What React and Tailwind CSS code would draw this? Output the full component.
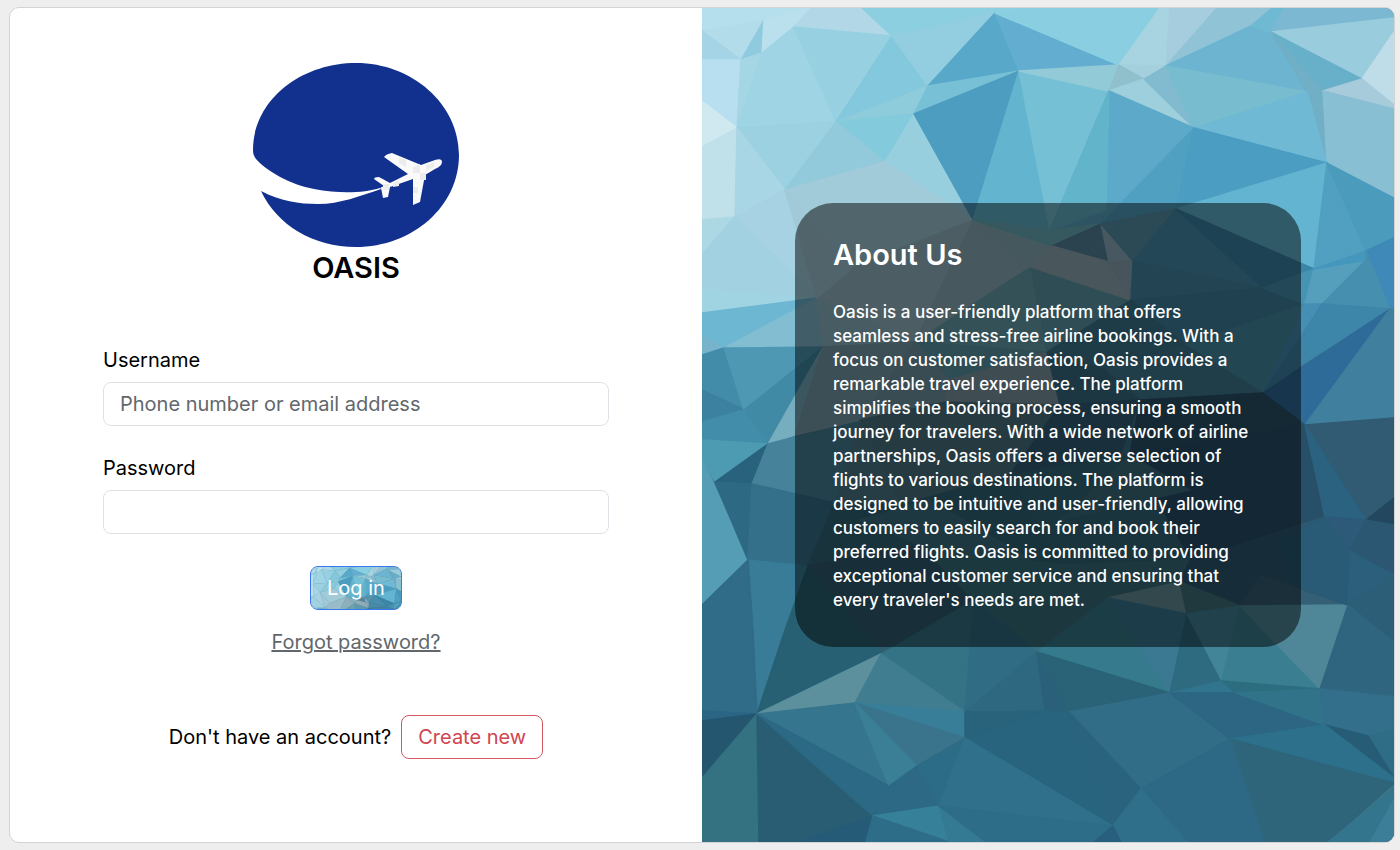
import React from "react";

const FACETS = [
  // upper left
  ["702,8 811,8 794,27 764,20 702,31", "#b5dfec"],
  ["702,31 764,20 741,60", "#b3dceb"],
  ["702,31 741,60 702,60", "#a5d4e6"],
  ["764,20 741,60 762,53", "#90cade"],
  ["764,20 811,8 794,27 762,53", "#b9e0ec"],
  ["811,8 862,8 892,36 794,27", "#b2d8e8"],
  ["862,8 1050,8 995,13 892,36", "#8ccfe1"],
  ["702,60 741,60 737,128 702,101", "#b7dfef"],
  ["741,60 762,53 737,128", "#a5d6e4"],
  ["702,101 737,128 702,147", "#d0e9f0"],
  ["702,147 737,128 735,217 702,220", "#c0e0ea"],
  ["762,53 794,27 836,122 737,128", "#9ed4e3"],
  ["794,27 892,36 836,122", "#97d1e1"],
  ["892,36 836,122 928,86", "#83c8dd"],
  ["892,36 995,13 928,86", "#93cde0"],
  ["737,128 836,122 785,190", "#9bd1e1"],
  ["737,128 785,190 735,217", "#a9d6e4"],
  ["836,122 928,86 914,114", "#8ecbdb"],
  ["836,122 914,114 885,162", "#83cbdc"],
  ["836,122 885,162 785,190", "#92cadb"],
  ["914,114 885,162 973,220", "#98cfde"],
  ["995,13 1019,71 928,86", "#58a8c9"],
  ["928,86 1019,71 914,114", "#78c0d5"],
  ["1019,71 914,114 973,220", "#4d9dc0"],
  ["1019,71 973,220 1050,230", "#63b5cf"],
  ["1019,71 1109,91 1050,230", "#76c0d5"],
  ["995,13 1119,65 1019,71", "#63aed0"],
  ["995,13 1050,8 1160,8 1119,65", "#8acfe1"],
  ["1019,71 1119,65 1109,91", "#92cad7"],
  // upper right
  ["1160,8 1170,8 1166,66 1119,65", "#a8d4e1"],
  ["1170,8 1217,8 1166,66", "#a6cddd"],
  ["1217,8 1272,8 1251,26 1166,66", "#91c3d6"],
  ["1119,65 1166,66 1144,79", "#a4d0dd"],
  ["1119,65 1144,79 1109,91", "#91c0cd"],
  ["1144,79 1109,91 1194,128", "#9ecfdd"],
  ["1144,79 1166,66 1194,128", "#82bacf"],
  ["1166,66 1251,26 1271,32 1307,92", "#6cb4cf"],
  ["1166,66 1307,92 1194,128", "#78bcd0"],
  ["1272,8 1285,8 1271,32 1251,26", "#6fb9d3"],
  ["1285,8 1394,8 1394,18 1271,32", "#7cb8d2"],
  ["1271,32 1394,18 1394,32 1362,79", "#99ccdc"],
  ["1394,32 1394,105 1362,79", "#bfdde9"],
  ["1271,32 1362,79 1323,91", "#68b0ca"],
  ["1271,32 1323,91 1327,163 1307,92", "#70afc5"],
  ["1323,91 1362,79 1394,105 1394,109", "#a7cbda"],
  ["1323,91 1394,109 1394,198 1327,163", "#89bfd3"],
  ["1194,128 1307,92 1327,163", "#6fb9d4"],
  ["1109,91 1194,128 1101,224 1050,230", "#5da9c9"],
  ["1109,91 1106,210 1050,230", "#62b4ca"],
  ["1194,128 1176,209 1101,224", "#50a0c2"],
  ["1194,128 1327,163 1176,209", "#4b9dc1"],
  ["1327,163 1314,269 1176,209", "#63b4d1"],
  ["1327,163 1366,251 1314,269", "#519fc1"],
  ["1327,163 1394,198 1394,238 1366,251", "#4b9bbd"],
  // middle left
  ["702,220 735,217 702,254", "#acd8e4"],
  ["735,217 785,190 817,298", "#a7d2e4"],
  ["702,254 735,217 817,298 702,290", "#a2d1e2"],
  ["702,290 817,298 702,313", "#a1d4e2"],
  ["702,313 817,298 724,348 702,335", "#6db7d3"],
  ["702,335 724,348 702,355", "#77b4cb"],
  ["817,298 823,347 724,348", "#83bdd1"],
  ["785,190 885,162 973,220 853,267", "#a2cbda"],
  ["853,267 973,220 915,342 817,298", "#98bdc9"],
  ["817,298 915,342 823,347", "#90b9c6"],
  ["853,267 817,298 785,190", "#a2c9d7"],
  ["973,220 1052,246 1031,267", "#8ab0bd"],
  ["973,220 1031,267 915,342", "#8eb0bc"],
  ["973,220 1050,230 1101,224 1052,246", "#6cb0bf"],
  ["915,342 1031,267 1047,352", "#6ba2b0"],
  ["1031,267 1131,300 1047,352", "#5e9aab"],
  ["1101,224 1109,262 1052,246", "#56849f"],
  ["1101,224 1133,261 1109,262", "#90b0c0"],
  ["1052,246 1109,262 1131,300 1031,267", "#92acb8"],
  ["1109,262 1133,261 1131,300", "#8ea9b6"],
  ["1101,224 1176,209 1133,261", "#5894aa"],
  ["1176,209 1263,288 1133,261", "#478fad"],
  ["1176,209 1314,269 1263,288", "#3b85a6"],
  ["1133,261 1263,288 1215,298 1131,300", "#478ba6"],
  ["1131,300 1263,288 1305,304 1185,345", "#40839f"],
  ["1131,300 1185,345 1105,370 1047,352", "#3c788e"],
  ["1185,345 1305,304 1263,393", "#478ca7"],
  ["1185,345 1263,393 1140,400 1105,370", "#417c92"],
  // right edge
  ["1263,288 1314,269 1305,304", "#4793b2"],
  ["1314,269 1366,260 1322,304 1305,304", "#559fbd"],
  ["1314,269 1366,251 1394,238 1394,262 1366,260", "#4597bd"],
  ["1366,251 1394,238 1394,309 1390,309", "#3f89b8"],
  ["1366,260 1366,251 1390,309 1322,304", "#468fae"],
  ["1305,304 1322,304 1300,338 1263,393", "#458eb4"],
  ["1322,304 1390,309 1300,366 1263,393 1300,338", "#3e85aa"],
  ["1390,309 1263,393 1305,425", "#2e6b98"],
  ["1390,309 1394,309 1394,418 1305,425", "#407f9d"],
  // left edge
  ["702,355 724,348 744,410 702,390", "#428ba9"],
  ["702,390 744,410 702,422", "#3c819f"],
  ["724,348 823,347 744,410", "#4e98b3"],
  ["823,347 744,410 768,444", "#418aa6"],
  ["823,347 795,435 768,444", "#76adbf"],
  ["702,422 744,410 768,444 702,440", "#428da9"],
  ["702,440 768,444 715,482 702,458", "#4d9bb2"],
  ["768,444 752,484 715,482", "#28627c"],
  ["702,458 748,560 702,605", "#549db5"],
  ["715,482 752,484 748,560", "#2e6983"],
  ["768,444 860,420 835,503 752,484", "#46829a"],
  ["752,484 835,503 808,566 748,560", "#34708a"],
  ["748,560 808,566 785,630 757,714 753,630", "#397c97"],
  ["702,605 748,560 753,630 757,714 702,711", "#306b87"],
  // centre
  ["823,347 915,342 860,420 795,435", "#7b9fac"],
  ["915,342 1047,352 950,380", "#5c98a9"],
  ["915,342 950,380 945,402 860,420", "#7398a6"],
  ["950,380 1047,352 1060,405 945,402", "#7f9ba6"],
  ["1047,352 1105,370 1140,400 1060,405", "#3a6e84"],
  ["860,420 945,402 1060,405 1010,475 900,505", "#4a7482"],
  ["860,420 900,505 835,503", "#4f7b8b"],
  ["1060,405 1140,400 1120,455 1010,475", "#326079"],
  ["1140,400 1263,393 1305,425 1130,455", "#2a526b"],
  ["1130,455 1305,425 1325,517 1190,560", "#284f68"],
  ["1010,475 1130,455 1190,560 1060,565", "#326879"],
  ["1130,455 1190,490 1060,520", "#3c6e7e"],
  ["835,503 900,505 1010,475 1060,565 930,545 808,566", "#33667a"],
  ["860,520 930,500 1030,560 920,545", "#3b7182"],
  ["808,566 920,545 974,600 974,620 881,654", "#315c70"],
  ["808,566 881,654 757,714 785,630", "#286073"],
  ["920,545 1060,565 1037,652 974,600", "#38707f"],
  ["974,600 974,647 965,712 881,654", "#347285"],
  ["974,600 1037,652 965,712", "#306d85"],
  ["1060,565 1190,560 1187,614 1108,598 1037,652", "#3a6f7f"],
  ["1108,598 1180,582 1187,614", "#67909b"],
  ["1190,560 1325,517 1348,605 1240,606 1180,582", "#2e5972"],
  ["1260,576 1348,605 1240,606", "#355f75"],
  ["1180,582 1240,606 1187,614", "#41727f"],
  ["1037,652 1108,598 1170,693", "#357b8d"],
  ["1108,598 1187,614 1170,693", "#3b7992"],
  ["1187,614 1222,681 1170,693", "#2e6b80"],
  ["1187,614 1240,606 1222,681", "#428498"],
  ["1240,606 1320,689 1222,681", "#397f91"],
  ["1240,606 1348,605 1320,689", "#4f8799"],
  // lower right edge
  ["1305,425 1394,418 1394,498 1366,520", "#315b73"],
  ["1305,425 1366,520 1325,517", "#2b627f"],
  ["1366,520 1394,498 1394,525", "#23475f"],
  ["1325,517 1366,520 1350,551", "#2c5a78"],
  ["1366,520 1394,525 1394,575 1350,551", "#2b5772"],
  ["1325,517 1350,551 1348,605 1290,585 1280,540", "#295a76"],
  ["1350,551 1394,575 1348,605", "#2b5f7b"],
  ["1348,605 1394,575 1394,642", "#2c5e78"],
  ["1348,605 1394,642 1394,697 1320,689", "#30657f"],
  // bottom left
  ["702,711 757,714 702,721", "#2c6484"],
  ["702,721 757,714 702,778", "#24566f"],
  ["757,714 759,842 702,842 702,778", "#347181"],
  ["757,714 873,816 866,842 759,842", "#285d73"],
  ["873,816 866,842 800,842", "#265b77"],
  ["757,714 881,654 855,703", "#5d909d"],
  ["881,654 965,712 855,703", "#407d91"],
  ["757,714 855,703 889,786", "#35758e"],
  ["757,714 889,786 873,816", "#2c6984"],
  ["855,703 965,712 965,738", "#387e98"],
  ["855,703 965,738 917,766", "#3a748c"],
  ["855,703 917,766 889,786", "#3b7f97"],
  ["889,786 917,766 939,806 873,816", "#2d6985"],
  ["917,766 965,738 939,806", "#2c6c86"],
  ["873,816 939,806 949,842", "#37809a"],
  ["873,816 949,842 866,842", "#2e6d88"],
  ["939,806 986,842 949,842", "#347a92"],
  ["965,712 1037,652 1045,711", "#2e6880"],
  ["965,712 1045,711 965,738", "#29637b"],
  ["1037,652 1069,712 1045,711", "#2a6079"],
  ["965,738 1045,711 1069,712 1113,826", "#28647d"],
  ["965,738 1113,826 939,806", "#30708b"],
  ["939,806 1113,826 1094,842 986,842", "#2e6d87"],
  // bottom right
  ["1037,652 1170,693 1069,712", "#2a6377"],
  ["1069,712 1170,693 1141,789", "#326d88"],
  ["1069,712 1141,789 1113,826", "#2a637e"],
  ["1170,693 1230,739 1141,789", "#316d86"],
  ["1170,693 1222,681 1236,693", "#31748d"],
  ["1170,693 1236,693 1325,725 1230,739", "#2d6682"],
  ["1222,681 1320,689 1236,693", "#2d6d80"],
  ["1236,693 1320,689 1325,725", "#31748a"],
  ["1320,689 1394,697 1394,732 1368,736 1325,725", "#336f8b"],
  ["1368,736 1394,730 1394,776", "#2f6d86"],
  ["1325,725 1368,736 1394,778", "#265c75"],
  ["1230,739 1325,725 1394,778 1394,783", "#2d708b"],
  ["1230,739 1394,783 1328,842 1264,842", "#2e657b"],
  ["1230,739 1264,842 1187,842 1141,789", "#2d6884"],
  ["1141,789 1187,842 1121,842 1113,826", "#2f6f89"],
  ["1113,826 1121,842 1094,842", "#285f7f"],
  ["1394,789 1394,842 1328,842", "#34758e"],
  ["1394,800 1394,842 1370,842", "#3c7e98"],
];

function Crystals({ viewBox, className }) {
  return (
    <svg
      viewBox={viewBox}
      preserveAspectRatio="xMidYMid slice"
      aria-hidden="true"
      className={className}
    >
      <rect x="702" y="8" width="692" height="834" fill="#3a7488" />
      {FACETS.map(([points, fill]) => (
        <polygon
          key={points}
          points={points}
          fill={fill}
          stroke={fill}
          strokeWidth="1.4"
          strokeLinejoin="round"
        />
      ))}
    </svg>
  );
}

function Logo() {
  return (
    <svg viewBox="0 0 206 184" className="h-[184px] w-[206px]" role="img" aria-label="Oasis logo">
      <path
        fill="#12318f"
        d="M0 87C0 38 47 0 103 0s103 41 103 92-46 92-103 92C60 184 24 162 8 128c19 10 38 13 57 13 22 0 42-8 63-15l-1-1c-16 5-40 6-66 1C38 122 12 107 3 96 1 93 0 91 0 87Z"
      />
      <path
        fill="#fafafa"
        d="M124 126.500L131 123 121 116q0-2 5-2l11 6 18-9-24-17q2-3 8-4l29 12 14-5q7-2 7 2 0 4-7 7l-10 6-5 27-7 3V116l-23 8-2 10-5 1-2-10Z"
      />
      <path
        fill="#ececec"
        d="M146 94l7 3v7l-7-4Zm14 10 7-3v9h-7Zm7 6h6v7h-6Zm6-8 8-3v5l-8 4Zm-13 22h5v6h-5Zm-20-4 6-3v6l-6 1Zm-10 1h6v6h-6Z"
      />
    </svg>
  );
}

function Field({ id, label, type, placeholder }) {
  return (
    <div className="flex flex-col gap-2">
      <label htmlFor={id} className="leading-7">
        {label}
      </label>
      <input
        id={id}
        type={type}
        placeholder={placeholder}
        className="h-11 w-full rounded-lg border border-[#dee2e6] bg-white px-4 placeholder:text-[#62676c] placeholder:opacity-100"
      />
    </div>
  );
}

export default function App() {
  return (
    <main className="flex min-h-screen bg-[#eeeeee] py-[7px] pr-[5px] pl-[9px] font-['Inter',sans-serif] text-[20px] text-black">
      <div className="grid flex-1 grid-cols-2 overflow-hidden rounded-[10px] border border-[#d3d3d3] bg-white">
        <section className="flex flex-col px-[93px] pt-[55px] pb-20">
          <div className="flex flex-col items-center">
            <Logo />
            <h1 className="mt-px text-[29px] leading-10 font-semibold">OASIS</h1>
          </div>
          <form className="mt-[58px] flex flex-col" onSubmit={(e) => e.preventDefault()}>
            <div className="flex flex-col gap-7">
              <Field id="username" label="Username" type="text" placeholder="Phone number or email address" />
              <Field id="password" label="Password" type="password" />
            </div>
            <div className="mt-8 flex flex-col items-center gap-[18px]">
              <button
                type="submit"
                className="relative h-11 overflow-hidden rounded-lg border border-[#3b78f0] px-4 text-white"
              >
                <Crystals viewBox="720 8 640 300" className="absolute inset-0 h-full w-full" />
                <span className="relative">Log in</span>
              </button>
              <a href="#forgot" className="leading-7 text-[#62676c] underline">
                Forgot password?
              </a>
            </div>
            <div className="mt-[59px] flex items-center justify-center gap-[10px]">
              <p>Don't have an account?</p>
              <button
                type="button"
                className="h-11 rounded-lg border border-[#d2575f] px-4 text-[#cf4550]"
              >
                Create new
              </button>
            </div>
          </form>
        </section>
        <section className="relative flex items-center px-[93px]">
          <Crystals viewBox="702 8 692 834" className="absolute inset-0 h-full w-full" />
          <div className="relative w-full rounded-[38px] bg-black/50 pt-8 pr-[46px] pb-[35px] pl-[38px] text-white">
            <h2 className="text-[29px] leading-10 font-semibold">About Us</h2>
            <p className="mt-[25px] text-[17px] leading-6 font-medium">
              Oasis is a user-friendly platform that offers seamless and stress-free airline
              bookings. With a focus on customer satisfaction, Oasis provides a remarkable travel
              experience. The platform simplifies the booking process, ensuring a smooth journey
              for travelers. With a wide network of airline partnerships, Oasis offers a diverse
              selection of flights to various destinations. The platform is designed to be
              intuitive and user-friendly, allowing customers to easily search for and book their
              preferred flights. Oasis is committed to providing exceptional customer service and
              ensuring that every traveler's needs are met.
            </p>
          </div>
        </section>
      </div>
    </main>
  );
}
